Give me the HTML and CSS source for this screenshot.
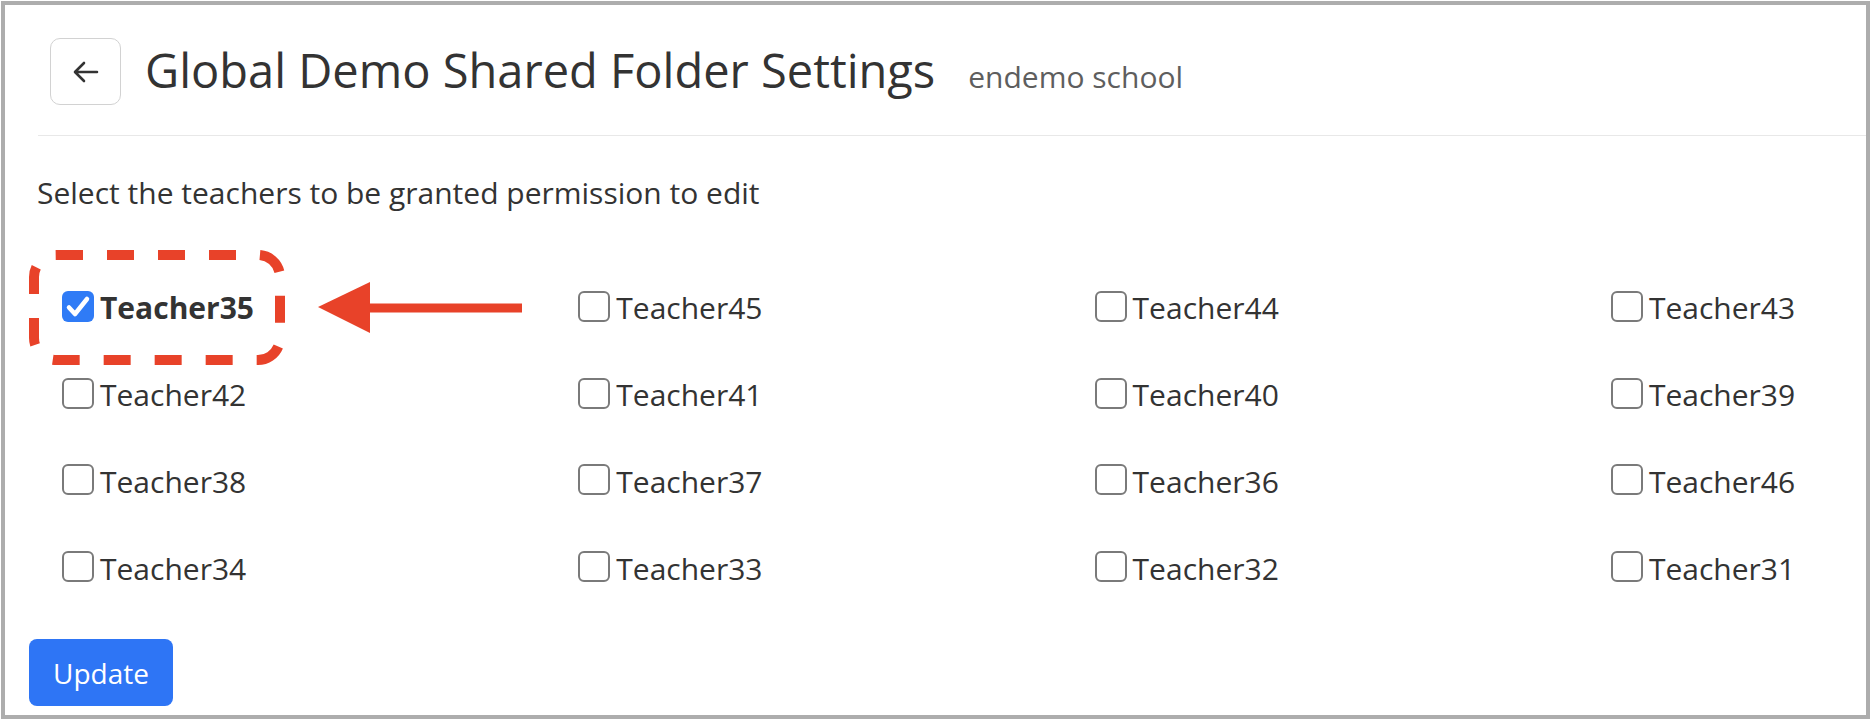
FILE: index.html
```html
<!DOCTYPE html>
<html lang="en">
<head>
<meta charset="utf-8">
<title>Global Demo Shared Folder Settings</title>
<link rel="stylesheet" href="styles.css">
</head>
<body>
<div class="frame">
  <header class="header">
    <button class="back" type="button" aria-label="Back">
      <svg width="26" height="22" viewBox="0 0 26 22"><path d="M24 11H2.5M11 2L2 11L11 20" fill="none" stroke="#333" stroke-width="2.6" stroke-linecap="round" stroke-linejoin="round"/></svg>
    </button>
    <div class="titles">
      <h1 class="title">Global Demo Shared Folder Settings</h1>
      <span class="subtitle">endemo school</span>
    </div>
  </header>

  <p class="intro">Select the teachers to be granted permission to edit</p>

  <div class="grid">
    <label class="item checked"><span class="box"><svg width="31" height="31" viewBox="0 0 31 31"><path d="M7 16.5L13 23L25 8" fill="none" stroke="#fff" stroke-width="4.5" stroke-linecap="round" stroke-linejoin="round"/></svg></span><span class="name">Teacher35</span></label>
    <label class="item"><span class="box"></span><span class="name">Teacher45</span></label>
    <label class="item"><span class="box"></span><span class="name">Teacher44</span></label>
    <label class="item"><span class="box"></span><span class="name">Teacher43</span></label>
    <label class="item"><span class="box"></span><span class="name">Teacher42</span></label>
    <label class="item"><span class="box"></span><span class="name">Teacher41</span></label>
    <label class="item"><span class="box"></span><span class="name">Teacher40</span></label>
    <label class="item"><span class="box"></span><span class="name">Teacher39</span></label>
    <label class="item"><span class="box"></span><span class="name">Teacher38</span></label>
    <label class="item"><span class="box"></span><span class="name">Teacher37</span></label>
    <label class="item"><span class="box"></span><span class="name">Teacher36</span></label>
    <label class="item"><span class="box"></span><span class="name">Teacher46</span></label>
    <label class="item"><span class="box"></span><span class="name">Teacher34</span></label>
    <label class="item"><span class="box"></span><span class="name">Teacher33</span></label>
    <label class="item"><span class="box"></span><span class="name">Teacher32</span></label>
    <label class="item"><span class="box"></span><span class="name">Teacher31</span></label>
  </div>

  <button class="update" type="button">Update</button>

  <svg class="annotation" width="600" height="400" viewBox="0 0 600 400">
    <rect x="34" y="255" width="246" height="105" rx="22" ry="22" fill="none" stroke="#e84229" stroke-width="10" stroke-dasharray="27 24"/>
    <line x1="364" y1="308" x2="522" y2="308" stroke="#e84229" stroke-width="9"/>
    <polygon points="318,307 370,282 370,333" fill="#e84229"/>
  </svg>
</div>
</body>
</html>
```

FILE: styles.css
```css
html, body {
  margin: 0;
  padding: 0;
  background: #ffffff;
}

body {
  font-family: "Open Sans", "Noto Sans", "DejaVu Sans", sans-serif;
  color: #333333;
}

.frame {
  position: relative;
  box-sizing: border-box;
  margin: 1px;
  width: 1869px;
  height: 718px;
  border: 4px solid #adadad;
  overflow: hidden;
  background: #ffffff;
}

.header {
  display: flex;
  align-items: center;
  margin-left: 33px;
  padding: 33px 0 30px 12px;
  border-bottom: 1px solid #e8e8e8;
}

.back {
  box-sizing: border-box;
  width: 71px;
  height: 67px;
  display: flex;
  align-items: center;
  justify-content: center;
  background: #ffffff;
  border: 1px solid #d2d2d2;
  border-radius: 10px;
  padding: 0;
  flex: none;
}

.titles {
  display: flex;
  align-items: baseline;
  margin-left: 24px;
}

.title {
  margin: 0;
  font-size: 47px;
  font-weight: 400;
  line-height: 1;
  color: #333333;
}

.subtitle {
  margin-left: 33px;
  font-size: 30px;
  color: #5e5e5e;
}

.intro {
  margin: 34px 0 0 32px;
  font-size: 30px;
  line-height: 45px;
  color: #333333;
}

.grid {
  display: grid;
  grid-template-columns: repeat(4, 516.3px);
  grid-auto-rows: 86.8px;
  margin-top: 48px;
  padding-left: 57px;
}

.item {
  display: flex;
  align-items: center;
}

.box {
  box-sizing: border-box;
  width: 32px;
  height: 31px;
  border: 2px solid #7a7a7a;
  border-radius: 6px;
  background: #ffffff;
  flex: none;
  display: flex;
}

.checked .box {
  border: none;
  background: #2f7bf6;
}

.name {
  margin-left: 6px;
  padding-top: 4px;
  font-size: 30px;
  line-height: 36px;
  color: #333333;
}

.checked .name {
  font-weight: 700;
}

.update {
  display: block;
  box-sizing: border-box;
  margin: 29px 0 0 24px;
  width: 144px;
  height: 67px;
  padding: 0;
  border: none;
  border-radius: 8px;
  background: #2e75f5;
  color: #ffffff;
  font-family: "Open Sans", "Noto Sans", "DejaVu Sans", sans-serif;
  font-size: 28px;
}

.annotation {
  position: absolute;
  left: -5px;
  top: -5px;
  overflow: visible;
  pointer-events: none;
}
```
